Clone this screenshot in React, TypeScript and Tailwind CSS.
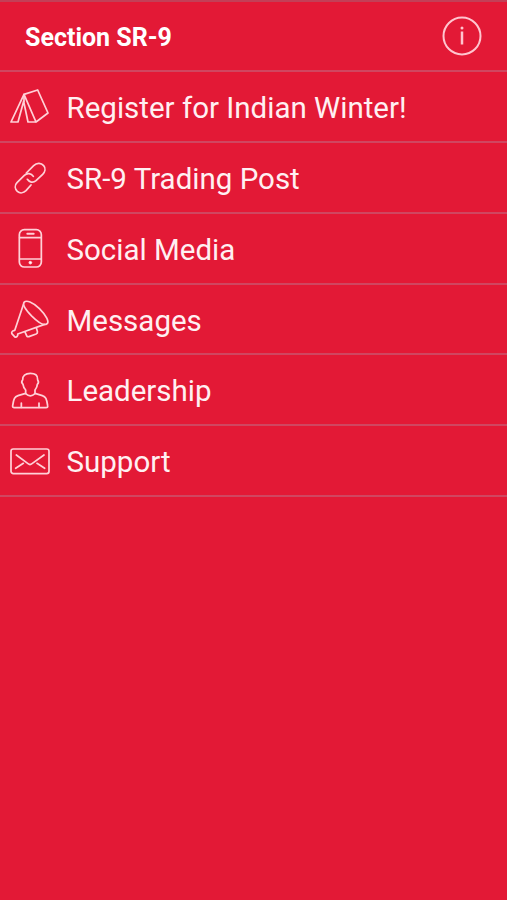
import type { ReactNode } from "react";

type Item = { label: string; height: string; icon: ReactNode };

const items: Item[] = [
  {
    label: "Register for Indian Winter!",
    height: "h-[71px]",
    icon: (
      <g transform="translate(0 24)">
        <path d="M72 43 L113 30 L144 99 L108 126 H84 L71 64 L54 126 H33 L72 43 L108 126" />
        <path d="M72 43 V64" />
      </g>
    ),
  },
  {
    label: "SR-9 Trading Post",
    height: "h-[71px]",
    icon: (
      <g transform="translate(0 21)">
        <path d="M79 69 L101 47 C111 37 124 39 131 47 C138 55 135 66 128 73 L108 92 C99 100 88 97 82 88" />
        <path d="M100 79 C94 69 81 68 73 76 L51 98 C43 106 45 117 52 124 C60 131 71 129 78 122 L93 105" />
      </g>
    ),
  },
  {
    label: "Social Media",
    height: "h-[71px]",
    icon: (
      <g transform="translate(0 18)">
        <rect x="58" y="29" width="66" height="112" rx="15" />
        <path d="M59 53 H123 M59 117 H123" />
        <path d="M82 41 H101" strokeWidth="6" />
        <circle cx="91" cy="128" r="4" fill="#fff" strokeWidth="3" />
      </g>
    ),
  },
  {
    label: "Messages",
    height: "h-[70px]",
    icon: (
      <g transform="translate(0 17)">
        <path d="M73 36 C80 28 99 34 120 55 C141 76 151 95 143 101 C134 108 115 96 96 77 C78 58 68 43 73 36 Z" />
        <path d="M71 43 L45 121 C38 122 34 126 36 131 L45 141 C51 143 55 138 54 132 L136 103" />
        <path d="M76 126 L81 137 Q83 142 88 140 L110 132 Q115 130 114 125 L111 115" />
      </g>
    ),
  },
  {
    label: "Leadership",
    height: "h-[71px]",
    icon: (
      <g transform="translate(0 21)">
        <path d="M77 84 V94 L54 101 C44 104 41 110 38 131 Q37 137 43 137 H138 Q144 137 143 131 C140 110 137 104 127 101 L105 94 V84 C110 78 112 73 112 67 C116 63 116 58 113 54 C114 39 105 34 91 34 C76 34 67 41 68 54 C64 58 65 63 69 67 C70 75 73 80 77 84 Z" />
        <path d="M64 123 V136 M117 123 V136" />
        <path d="M77 95 Q91 108 105 95" />
      </g>
    ),
  },
  {
    label: "Support",
    height: "h-[71px]",
    icon: (
      <g transform="translate(0 18)">
        <rect x="33" y="51" width="114" height="74" rx="7" />
        <path d="M49 69 L84 95 Q90 100 96 95 L132 69 M47 109 L70 94 M134 109 L111 94" />
      </g>
    ),
  },
];

export default function App() {
  return (
    <main className="flex h-[900px] w-[507px] flex-col overflow-hidden bg-[#e31936] font-['Roboto',sans-serif] text-white">
      <header className="flex h-[72px] shrink-0 items-center justify-between border-t-2 border-b-2 border-t-[#c33f57] border-b-[#d04660] pr-[25px] pl-[25px]">
        <h1 className="pt-[3px] text-[25px] leading-none font-bold">Section SR-9</h1>
        <button aria-label="Information">
          <svg width="40" height="40" viewBox="0 0 40 40" fill="none" stroke="#ffc5cf" strokeWidth="2">
            <circle cx="20" cy="20" r="18.5" />
            <path d="M20 15.5 V28.5" strokeWidth="2.5" />
            <circle cx="20" cy="12" r="1.5" fill="#ffc5cf" stroke="none" />
          </svg>
        </button>
      </header>
      <nav className="flex flex-col">
        {items.map((item) => (
          <a key={item.label} className={`flex items-center border-b-2 border-[#d04660] ${item.height}`}>
            <svg
              className="h-full w-[60px] shrink-0 overflow-visible"
              viewBox="0 0 180 207"
              preserveAspectRatio="xMinYMin"
              fill="none"
              stroke="#ffd0d7"
              strokeWidth="5.2"
              strokeLinejoin="round"
              strokeLinecap="round"
            >
              {item.icon}
            </svg>
            <span className="pt-[5px] pl-[6.5px] text-[29.5px] leading-none whitespace-nowrap text-[#fff0f2]">{item.label}</span>
          </a>
        ))}
      </nav>
    </main>
  );
}
